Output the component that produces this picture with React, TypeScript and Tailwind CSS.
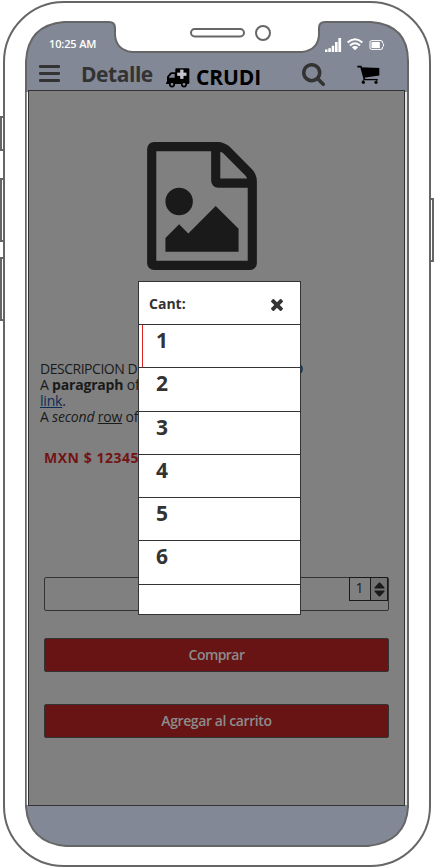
import React from "react";

const FILE_IMAGE =
  "M1468 380q28 28 48 76t20 88v1152q0 40-28 68t-68 28h-1344q-40 0-68-28t-28-68v-1600q0-40 28-68t68-28h896q40 0 88 20t76 48zm-444-244v376h376q-10-29-22-41l-313-313q-12-12-41-22zm384 1528v-1024h-416q-40 0-68-28t-28-68v-416h-768v1536h1280zm-128-448v320h-1024v-192l192-192 128 128 384-384zm-832-192q-80 0-136-56t-56-136 56-136 136-56 136 56 56 136-56 136-136 56z";
const SEARCH =
  "M1216 832q0-185-131.5-316.5t-316.5-131.5-316.5 131.5-131.5 316.5 131.5 316.5 316.5 131.5 316.5-131.5 131.5-316.5zm512 832q0 52-38 90t-90 38q-54 0-90-38l-343-342q-179 124-399 124-143 0-273.5-55.5t-225-150-150-225-55.5-273.5 55.5-273.5 150-225 225-150 273.5-55.5 273.5 55.5 225 150 150 225 55.5 273.5q0 220-124 399l343 343q37 37 37 90z";
const TIMES =
  "M1490 1322q0 40-28 68l-136 136q-28 28-68 28t-68-28l-294-294-294 294q-28 28-68 28t-68-28l-136-136q-28-28-28-68t28-68l294-294-294-294q-28-28-28-68t28-68l136-136q28-28 68-28t68 28l294 294 294-294q28-28 68-28t68 28l136 136q28 28 28 68t-28 68l-294 294 294 294q28 28 28 68z";

function PhoneFrame() {
  return (
    <svg className="absolute inset-0" width="434" height="867" fill="none" stroke="#666" strokeWidth="2">
      <path d="M4 117H1V150H4M4 179H1V241H4M4 258H1V320H4M430 199H433V261H430" />
      <rect x="4" y="2" width="426" height="864" rx="60" fill="#fff" />
      <path
        d="M64 22H109Q115 22 115 28V35Q116 50 132 52H302Q318 50 319 35V28Q319 22 325 22H371Q408 25 408 61V807Q406 842 368 846H66Q29 843 26 807V61Q28 25 64 22Z"
        fill="#838896"
      />
      <path d="M27.5 92V805M406 92V805" stroke="#fff" strokeWidth="1.5" />
      <rect x="191" y="29" width="53" height="7.5" rx="3.75" />
      <circle cx="263" cy="33" r="7" />
    </svg>
  );
}

function StatusIcons() {
  return (
    <svg width="60" height="16" viewBox="325 37 60 16" fill="#fff">
      <path d="M325 49.5h2.5V52H325zM328.3 48.3h2.6V52h-2.6zM331.7 45.7h2.5V52h-2.5zM335 42h2.6v10H335zM338.4 38h2.7v14h-2.7z" />
      <g fill="none" stroke="#fff" strokeWidth="2">
        <path d="M347.6 42.6Q355 36 362.4 42.6" />
        <path d="M350 45.4Q355 41 360 45.4" />
      </g>
      <path d="M351.8 47.2Q355 44.6 358.2 47.2L355 50.3z" />
      <path d="M371.5 40.6h9.5q1.5 0 1.5 1.5v.9q1.2.4 1.2 2t-1.2 2v.9q0 1.5-1.5 1.5h-9.5q-1.5 0-1.5-1.5V42.1q0-1.5 1.5-1.5z" fill="none" stroke="#fff" strokeWidth="1" />
      <rect x="371.5" y="42" width="8.3" height="6" />
    </svg>
  );
}

function AmbulanceIcon() {
  return (
    <svg className="mt-[5px] shrink-0" width="24" height="20" viewBox="498 204 72 60">
      <path
        fillRule="evenodd"
        d="M529 205H565Q568 205 568 208V249Q568 252 565 252H500Q498 252 498 249T501 246V232Q501 229 503 227L510 219Q512 217 515 217H526V208Q526 205 529 205ZM524 222H515L507 231V233H524ZM541 209V218H532V227H541V236H550V227H559V218H550V209Z"
      />
      <path d="M541 209h9v9h9v9h-9v9h-9v-9h-9v-9h9z" fill="#c3c5cc" />
      <circle cx="516" cy="253" r="6.8" fill="#838896" stroke="#000" strokeWidth="5" />
      <circle cx="552" cy="253" r="6.8" fill="#838896" stroke="#000" strokeWidth="5" />
    </svg>
  );
}

function CartIcon() {
  return (
    <svg className="-mt-[2px] ml-[32px]" width="23" height="19" viewBox="357 65 23 19">
      <path d="M361 67.3L379.3 68V75.6L363.8 77.8Z" fill="#000" />
      <path d="M357.3 66.6H360.9L364.4 79.3" fill="none" stroke="#000" strokeWidth="1.6" />
      <path d="M363.5 79.6H377.6" stroke="#000" strokeWidth="1.3" />
      <path d="M362 81.8L364 79.6M376 81.8L377.4 79.6" stroke="#000" strokeWidth="1" />
      <circle cx="363.4" cy="82.3" r="1.6" />
      <circle cx="376" cy="82.3" r="1.6" />
    </svg>
  );
}

const rows = [
  { n: "1", h: "h-[43px]" },
  { n: "2", h: "h-[44px]" },
  { n: "3", h: "h-[43px]" },
  { n: "4", h: "h-[43px]" },
  { n: "5", h: "h-[43px]" },
  { n: "6", h: "h-[44px]" },
];

function QuantityDialog() {
  return (
    <div className="absolute left-[138px] top-[281px] flex h-[334px] w-[163px] flex-col border border-[#333] bg-white font-bold text-[#333]">
      <header className="flex h-[43px] shrink-0 items-center justify-between border-b border-[#333] pl-[10px] pr-[17px]">
        <span className="mt-[2px] text-[14px] leading-[20px]">Cant:</span>
        <svg className="mt-[3px]" width="12" height="12" viewBox="302 366 1188 1188" fill="#333">
          <path d={TIMES} />
        </svg>
      </header>
      {rows.map((r, i) => (
        <div key={r.n} className={`flex shrink-0 border-b border-[#333] pl-[3px] ${r.h}`}>
          <span className={`w-px ${i === 0 ? "bg-[#d22]" : ""}`} />
          <span className="pl-[13px] text-[21px] leading-[30px]">{r.n}</span>
        </div>
      ))}
    </div>
  );
}

export default function App() {
  return (
    <div className="relative h-[867px] w-[434px] overflow-hidden bg-white font-['Open_Sans','Noto_Sans',sans-serif]">
      <PhoneFrame />
      <div className="relative flex flex-col pl-[28px] pr-[29px]">
        <div className="flex h-[60px] items-start justify-between pl-[21px] pr-[20px] pt-[37px] text-[11px] font-semibold leading-[15px] text-white">
          <span className="-mt-px tracking-[-0.15px]">10:25 AM</span>
          <StatusIcons />
        </div>
        <header className="flex h-[30px] items-center pl-[11px] text-[#333]">
          <div className="-mt-[3px] flex w-[21px] flex-col gap-[4px]">
            <span className="h-[3px] rounded-[1px] bg-[#333]" />
            <span className="h-[3px] rounded-[1px] bg-[#333]" />
            <span className="h-[3px] rounded-[1px] bg-[#333]" />
          </div>
          <h1 className="-mt-[2px] ml-[21px] w-[85px] text-[21px] font-bold leading-[28px] tracking-[-0.45px]">Detalle</h1>
          <AmbulanceIcon />
          <span className="ml-[6px] mt-[4px] w-[106px] text-[21px] font-bold leading-[28px] tracking-[-0.1px] text-black">CRUDI</span>
          <svg className="-mt-px" width="23" height="23" viewBox="64 128 1664 1664" fill="#333">
            <path d={SEARCH} />
          </svg>
          <CartIcon />
        </header>
        <main className="h-[716px] border border-[#333] bg-[#808080] px-[15px] text-[14px] text-[#1a1a1a]">
          <div className="flex h-[270px] pl-[103px] pt-[51px]">
            <svg width="110" height="128" viewBox="0 0 1536 1792" fill="#1a1a1a">
              <path d={FILE_IMAGE} />
            </svg>
          </div>
          <div className="-ml-[4px] h-[87px] whitespace-nowrap text-[14px] leading-[16px] tracking-[-0.2px]">
            <p className="tracking-[-0.48px]">DESCRIPCION DEL PRODUCTO MOSTRADO</p>
            <p>A <b>paragraph</b> of</p>
            <p><span className="text-[#0b2c57] underline">link</span>.</p>
            <p>A <i>second</i> <span className="underline">row</span> of</p>
          </div>
          <p className="h-[129px] text-[14px] font-bold leading-[20px] tracking-[0.53px] text-[#731414]">MXN $ 12345</p>
          <div className="flex h-[34px] items-start justify-end rounded-[2px] border border-[#333]">
            <div className="-mt-px flex h-[24px] w-[39px] border border-[#1a1a1a]">
              <span className="w-[21px] border-r border-[#1a1a1a] pr-px text-center leading-[20px]">1</span>
              <span className="flex flex-1 items-center justify-center bg-[#737373]">
                <svg width="11" height="15" fill="#1a1a1a">
                  <path d="M.5 6.5v-1L5 .5h1l4.5 5v1zM.5 8.5v1L5 14.5h1l4.5-5v-1z" />
                </svg>
              </span>
            </div>
          </div>
          <button className="mt-[27px] block h-[34px] w-full rounded-[2px] border border-[#333] bg-[#681414] text-[14px] font-semibold leading-[20px] tracking-[-0.55px] text-[#8c8c8c]">Comprar</button>
          <button className="mt-[32px] block h-[34px] w-full rounded-[2px] border border-[#333] bg-[#681414] text-[14px] font-semibold leading-[20px] tracking-[-0.4px] text-[#8c8c8c]">Agregar al carrito</button>
        </main>
      </div>
      <QuantityDialog />
    </div>
  );
}
